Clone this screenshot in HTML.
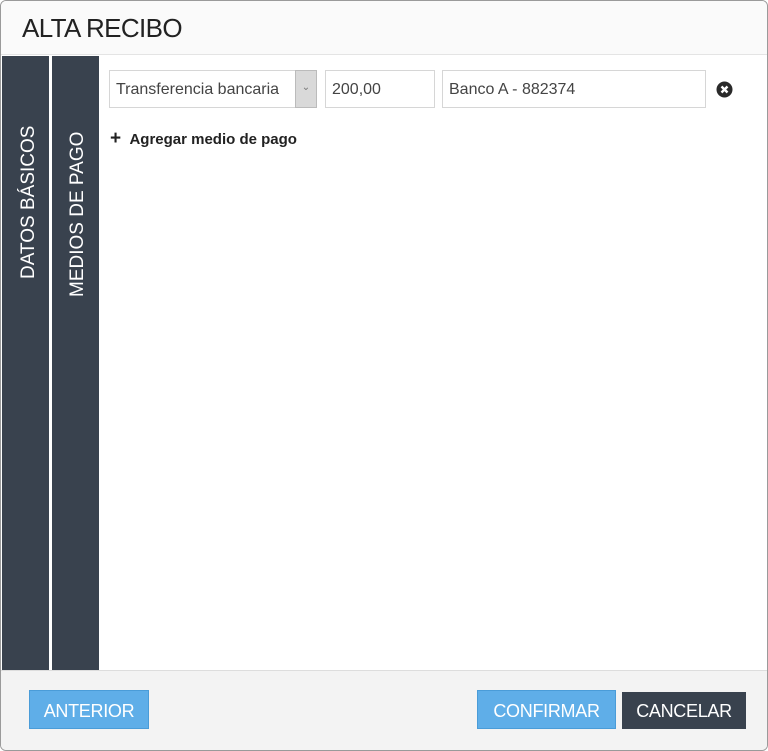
<!DOCTYPE html>
<html><head><meta charset="utf-8"><style>
*{box-sizing:border-box;margin:0;padding:0}
body{width:768px;height:751px;background:#fff;font-family:"Liberation Sans",sans-serif;position:relative;overflow:hidden}
.frame{position:absolute;left:0;top:0;width:768px;height:751px;border:1px solid #9a9a9a;border-radius:6px;overflow:hidden;background:#fff}
.hdr{position:absolute;left:0;top:0;width:766px;height:54px;background:#fafafa;border-bottom:1px solid #e4e4e4}
.hdr h1{position:absolute;left:21px;top:12px;font-size:26px;font-weight:normal;color:#222;letter-spacing:-0.6px}
.tab{position:absolute;top:55px;height:614px;background:#39424e}
.vt{position:absolute;color:#fff;font-size:19px;white-space:nowrap;transform-origin:0 0;transform:rotate(-90deg)}
.inp{position:absolute;top:69px;height:38px;border:1px solid #d6d6d6;background:#fff;font-size:16px;color:#444;padding:10px 6px;white-space:nowrap;overflow:hidden}
.ftr{position:absolute;left:0;top:669px;width:766px;height:80px;background:#f3f3f3;border-top:1px solid #ddd}
.btn{position:absolute;color:#fff;font-size:18px;text-align:center;line-height:40px;letter-spacing:-0.3px}
.blue{background:#5faee8;border:1px solid #4a9cd8}
</style></head><body><div class="frame">
<div class="hdr"><h1>ALTA RECIBO</h1></div>
<div class="tab" style="left:1px;width:47px"></div>
<div class="tab" style="left:51px;width:47px"></div>
<div class="vt" style="left:17px;top:278px">DATOS BÁSICOS</div>
<div class="vt" style="left:66px;top:296px">MEDIOS DE PAGO</div>
<div class="inp" style="left:108px;width:187px">Transferencia bancaria</div>
<div style="position:absolute;left:294px;top:69px;width:22px;height:38px;background:#d9d9d9;border:1px solid #bbb;color:#777;font-size:10px;text-align:center;line-height:34px">&#8964;</div>
<div class="inp" style="left:324px;width:110px">200,00</div>
<div class="inp" style="left:441px;width:264px">Banco A - 882374</div>
<svg style="position:absolute;left:715px;top:80px" width="17" height="17" viewBox="0 0 17 17"><circle cx="8.5" cy="8.5" r="8" fill="#2a2a2a"/><path d="M5.5 5.5L11.5 11.5M11.5 5.5L5.5 11.5" stroke="#fff" stroke-width="2.4"/></svg>
<div style="position:absolute;left:109px;top:130px;font-size:15px;font-weight:bold;color:#222"><span style="font-size:19px;line-height:15px">+</span>&nbsp;&nbsp;Agregar medio de pago</div>
<div class="ftr"></div>
<div class="btn blue" style="left:28px;top:689px;width:120px;height:39px">ANTERIOR</div>
<div class="btn blue" style="left:476px;top:689px;width:139px;height:39px">CONFIRMAR</div>
<div class="btn" style="left:621px;top:691px;width:124px;height:37px;background:#39424e;line-height:38px">CANCELAR</div>
</div></body></html>
